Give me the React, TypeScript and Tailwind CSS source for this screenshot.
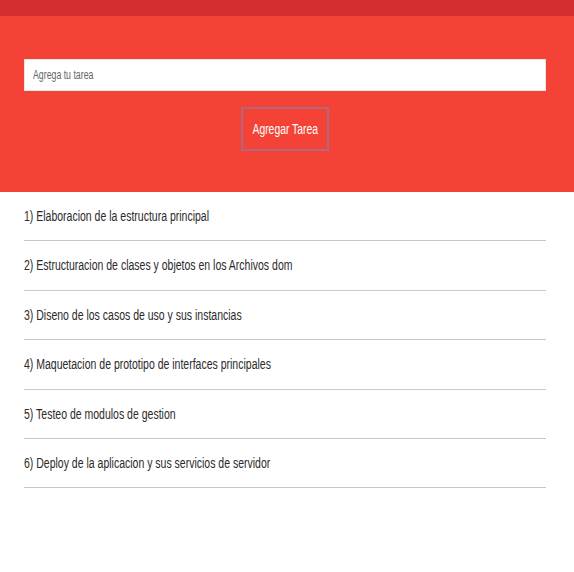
const tareas = [
  '1) Elaboracion de la estructura principal',
  '2) Estructuracion de clases y objetos en los Archivos dom',
  '3) Diseno de los casos de uso y sus instancias',
  '4) Maquetacion de prototipo de interfaces principales',
  '5) Testeo de modulos de gestion',
  '6) Deploy de la aplicacion y sus servicios de servidor',
];

export default function App() {
  return (
    <div className="min-h-[572px] bg-white font-['Liberation_Sans',Arial,sans-serif]">
      {/* top bar */}
      <div className="h-4 bg-[#d32f2f]" />

      {/* form */}
      <div className="bg-[#f44336] pl-6 pr-7 pt-[43px] pb-[41px] flex flex-col items-center">
        <div className="w-full h-8 bg-white border border-[#e8e8e8] flex items-center px-2">
          <span className="text-[12px] text-[#666] origin-left scale-x-[0.73] whitespace-nowrap">
            Agrega tu tarea
          </span>
        </div>
        <button className="mt-4 w-[88px] h-11 border-2 border-[#b2677f] text-white text-[14px] flex items-center justify-center">
          <span className="scale-x-[0.74] whitespace-nowrap">Agregar Tarea</span>
        </button>
      </div>

      {/* list */}
      <ul className="pl-6 pr-7">
        {tareas.map((t) => (
          <li
            key={t}
            className="h-[49.4px] pt-[16px] border-b border-[#c8c8c8]"
          >
            <span className="block text-[14px] leading-4 text-[#2a2a2a] origin-left scale-x-[0.75] whitespace-nowrap">
              {t}
            </span>
          </li>
        ))}
      </ul>
    </div>
  );
}
